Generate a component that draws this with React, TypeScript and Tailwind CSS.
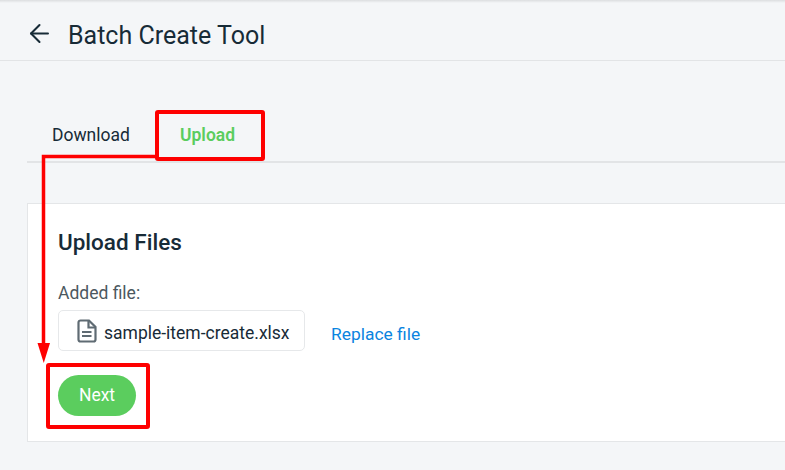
import { ArrowLeft } from 'lucide-react';

function FileIcon() {
  return (
    <svg width="20" height="24" viewBox="0 0 20 24" fill="none" stroke="#5f6b73" strokeWidth="2.200" className="shrink-0">
      <path d="M3.500 1.500h8.500l6.500 6.500v12.500a2 2 0 0 1-2 2H3.500a2 2 0 0 1-2-2v-17a2 2 0 0 1 2-2z" />
      <path d="M11.500 1.500v7h7" />
      <path d="M5 13h9.500M5 17h9.500" />
    </svg>
  );
}

// red callouts drawn on top of the screenshot
function Callouts() {
  return (
    <svg width="785" height="470" className="absolute left-0 top-0 pointer-events-none" fill="none">
      <rect x="157" y="112" width="106" height="47" rx="1" stroke="#fe0000" strokeWidth="4" />
      <path d="M156 156.500H43.500V345" stroke="#fe0000" strokeWidth="3.500" />
      <path d="M37.500 343h12.500l-6.250 20z" fill="#fe0000" />
      <rect x="48" y="365" width="100" height="62" rx="1" stroke="#fe0000" strokeWidth="4" />
    </svg>
  );
}

export default function App() {
  return (
    <div className="relative w-[785px] h-[470px] overflow-hidden bg-[#f4f6f8] font-['Roboto',sans-serif] text-[#172b37]">
      <div className="h-[3px] bg-gradient-to-b from-[#dcdee0] to-[#f4f6f8]" />

      {/* Header */}
      <div className="flex items-center h-[58px] pt-[4px] pl-[25px] border-b border-[#e2e4e6]">
        <ArrowLeft className="w-[29px] h-[29px] text-[#172b37]" strokeWidth={1.700} />
        <h1 className="ml-[14px] mt-[3px] text-[25px] leading-none">Batch Create Tool</h1>
      </div>

      {/* Tabs */}
      <div className="flex ml-[27px] mt-[50px] h-[52px] border-b-2 border-[#e2e4e6]">
        <div className="w-[128px] pl-[25px] pt-[13px] text-[17.500px] leading-[22px]">Download</div>
        <div className="pl-[25px] pt-[13px] text-[17.500px] leading-[22px] font-semibold text-[#5bcd5e]">Upload</div>
      </div>

      {/* Card */}
      <div className="ml-[27px] mt-[40px] w-[800px] h-[239px] bg-white border border-[#e4e6e8] pl-[30px] pt-[25px]">
        <h2 className="text-[22.500px] leading-[26px] font-medium">Upload Files</h2>
        <div className="mt-[28px] text-[17.500px] leading-[20px] text-[#4b5860]">Added file:</div>
        <div className="flex items-center mt-[7px]">
          <div className="flex items-center gap-[7px] h-[41px] w-[247px] pl-[18px] rounded-[5px] border border-[#e6e8ea]">
            <FileIcon />
            <span className="mt-[6px] text-[17.500px] leading-none">sample-item-create.xlsx</span>
          </div>
          <a className="ml-[26px] mt-[8px] text-[17.400px] leading-none text-[#0a84e0]">Replace file</a>
        </div>
        <button className="block mt-[24px] w-[78px] h-[41px] rounded-full bg-[#5bcd5e] text-white text-[17.500px]">
          Next
        </button>
      </div>

      <Callouts />
    </div>
  );
}
